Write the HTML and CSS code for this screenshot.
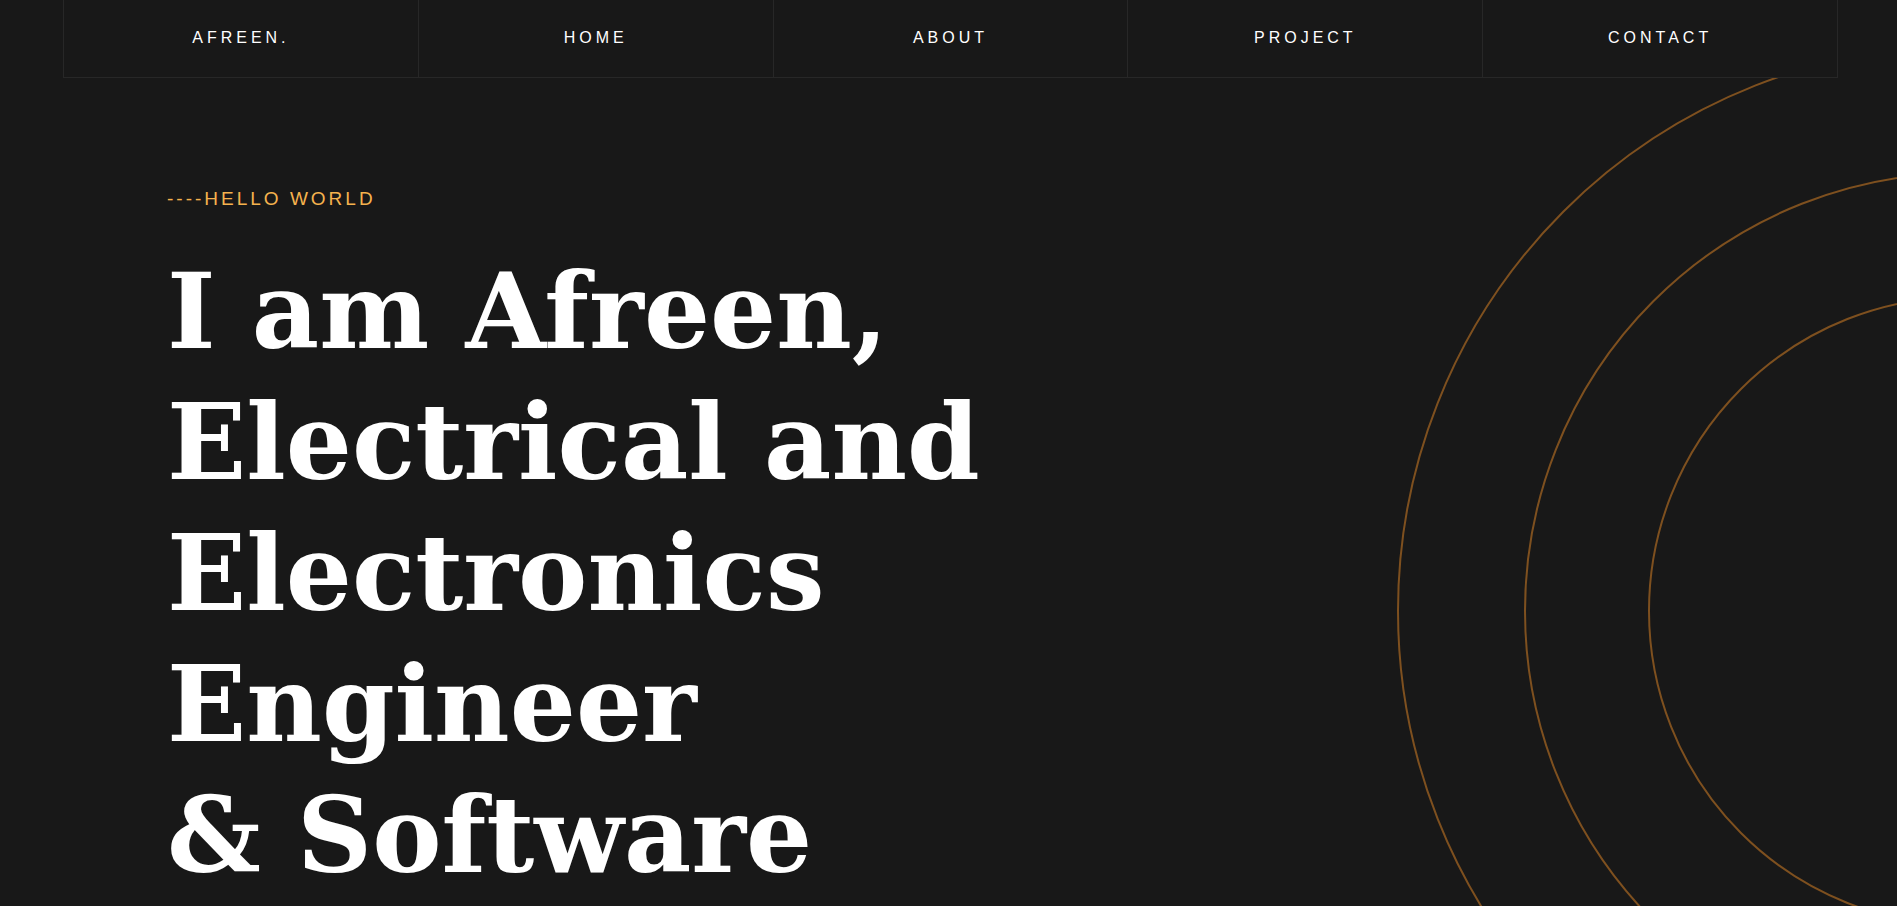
FILE: index.html
```html
<!DOCTYPE html>
<html lang="en">
<head>
<meta charset="utf-8">
<title>Afreen</title>
<link rel="stylesheet" href="styles.css">
</head>
<body>
<header class="site-header">
  <nav class="nav">
    <a class="nav-item brand" href="#">AFREEN.</a>
    <a class="nav-item" href="#">HOME</a>
    <a class="nav-item" href="#">ABOUT</a>
    <a class="nav-item" href="#">PROJECT</a>
    <a class="nav-item" href="#">CONTACT</a>
  </nav>
</header>
<main class="hero">
  <div class="rings" aria-hidden="true">
    <span class="ring ring-outer"></span>
    <span class="ring ring-middle"></span>
    <span class="ring ring-inner"></span>
  </div>
  <div class="hero-content">
    <p class="eyebrow">----HELLO WORLD</p>
    <h1 class="headline">I am Afreen, Electrical and Electronics Engineer<br>&amp; Software</h1>
  </div>
</main>
</body>
</html>
```

FILE: styles.css
```css
* { box-sizing: border-box; }

html, body {
  margin: 0;
  padding: 0;
  background: #181818;
  overflow: hidden;
}

body {
  font-family: "Liberation Sans", Arial, sans-serif;
  color: #ffffff;
}

.site-header {
  padding: 0 59px 0 63px;
}

.nav {
  display: grid;
  grid-template-columns: repeat(5, 1fr);
  border-left: 1px solid #272727;
  border-bottom: 1px solid #272727;
}

.nav-item {
  height: 77px;
  display: flex;
  align-items: center;
  justify-content: center;
  border-right: 1px solid #272727;
  color: #ffffff;
  text-decoration: none;
  font-size: 16px;
  letter-spacing: 4px;
  padding-bottom: 2px;
}

.hero {
  position: relative;
  height: 828px;
  overflow: hidden;
}

.rings {
  position: absolute;
  inset: 0;
  pointer-events: none;
}

.ring {
  position: absolute;
  border: 2px solid #7e501f;
  border-radius: 50%;
}

.ring-outer {
  width: 1132px;
  height: 1132px;
  left: 1397px;
  top: -33px;
}

.ring-middle {
  width: 878px;
  height: 878px;
  left: 1524px;
  top: 94px;
}

.ring-inner {
  width: 630px;
  height: 630px;
  left: 1648px;
  top: 218px;
}

.hero-content {
  position: relative;
  padding: 110px 0 0 167px;
}

.eyebrow {
  margin: 0;
  color: #f5b24e;
  font-size: 19px;
  letter-spacing: 3px;
}

.headline {
  margin: 36px 0 0;
  max-width: 900px;
  font-family: "DejaVu Serif", "Liberation Serif", serif;
  font-weight: 700;
  font-size: 104px;
  line-height: 131px;
  letter-spacing: 0;
  color: #ffffff;
}
```
